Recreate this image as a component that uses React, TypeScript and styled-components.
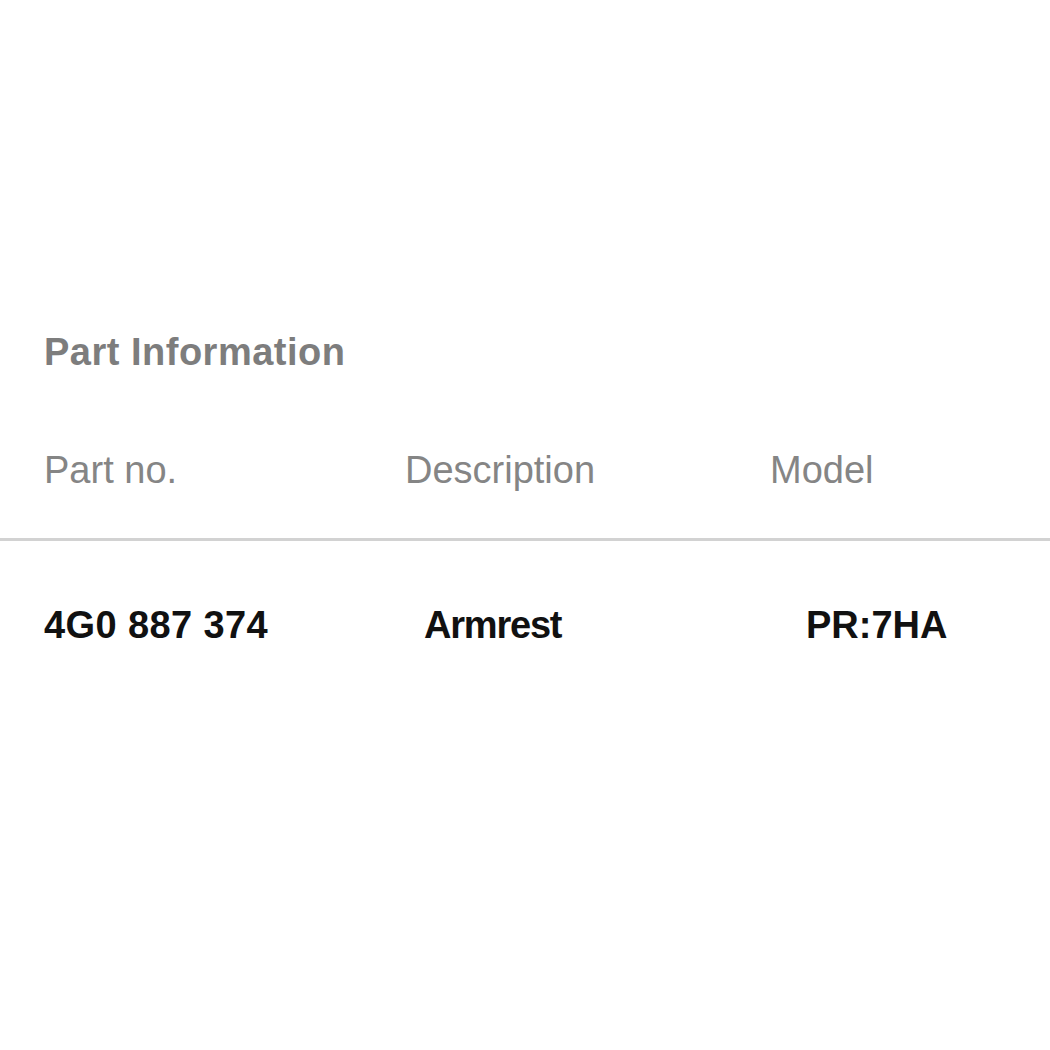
import styled, { createGlobalStyle } from 'styled-components';

const GlobalStyle = createGlobalStyle`
  html, body {
    margin: 0;
    padding: 0;
    background-color: #fff;
  }
  body {
    font-family: 'Liberation Sans', Arial, sans-serif;
  }
`;

const Page = styled.div`
  width: 1050px;
  min-height: 1050px;
  padding-top: 330px;
  box-sizing: border-box;
`;

const Title = styled.h2`
  margin: 0 0 74px;
  padding-left: 44px;
  font-size: 38px;
  line-height: 44px;
  font-weight: 700;
  color: #7d7d7d;
  letter-spacing: 0.5px;
`;

const Row = styled.div<{ $head?: boolean }>`
  display: grid;
  grid-template-columns: 361px 365px 1fr;
  padding-left: 44px;
  padding-top: ${(p) => (p.$head ? '0' : '62px')};
  padding-bottom: ${(p) => (p.$head ? '46px' : '0')};
  border-bottom: ${(p) => (p.$head ? '3px solid #d2d2d2' : 'none')};
`;

const Cell = styled.div<{ $head?: boolean; $indent?: number; $tracking?: number }>`
  font-size: 38px;
  line-height: 44px;
  font-weight: ${(p) => (p.$head ? 400 : 700)};
  color: ${(p) => (p.$head ? '#858585' : '#111')};
  padding-left: ${(p) => p.$indent ?? 0}px;
  letter-spacing: ${(p) => p.$tracking ?? 0}px;
  white-space: nowrap;
`;

export default function App() {
  return (
    <>
      <GlobalStyle />
      <Page>
        <Title>Part Information</Title>
        <Row $head>
          <Cell $head>Part no.</Cell>
          <Cell $head>Description</Cell>
          <Cell $head>Model</Cell>
        </Row>
        <Row>
          <Cell $tracking={0.4}>4G0 887 374</Cell>
          <Cell $indent={19} $tracking={-1.2}>Armrest</Cell>
          <Cell $indent={36}>PR:7HA</Cell>
        </Row>
      </Page>
    </>
  );
}
